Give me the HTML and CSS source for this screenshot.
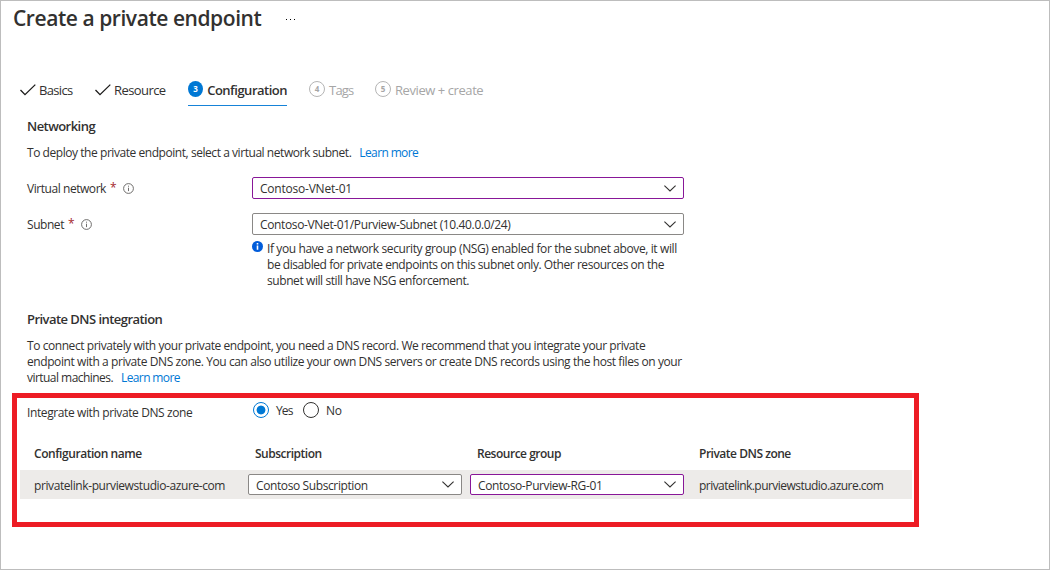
FILE: index.html
```
<!DOCTYPE html>
<html lang="en">
<head>
<meta charset="utf-8">
<title>Create a private endpoint</title>
<link rel="stylesheet" href="styles.css">
</head>
<body>
<main class="page">
  <header class="title-bar">
    <h1>Create a private endpoint</h1>
    <svg class="more" width="12" height="4" viewBox="0 0 12 4"><path d="M1 1h1v1H1zM5 1h1v1H5zM9 1h1v1H9z"/></svg>
  </header>

  <nav class="steps">
    <a class="step basics"><svg class="check" width="16" height="12" viewBox="0 0 16 12"><path d="M.5 6 5 10.7 15.3.6"/></svg><span>Basics</span></a>
    <a class="step resource"><svg class="check" width="16" height="12" viewBox="0 0 16 12"><path d="M.5 6 5 10.7 15.3.6"/></svg><span>Resource</span></a>
    <a class="step active"><i class="num">3</i><span>Configuration</span></a>
    <a class="step todo tags"><i class="num">4</i><span>Tags</span></a>
    <a class="step todo review"><i class="num">5</i><span>Review + create</span></a>
  </nav>

  <section class="networking">
    <h2>Networking</h2>
    <p class="intro"><span class="t44">To deploy the private endpoint, select a virtual network subnet.</span><a class="link">Learn more</a></p>
    <div class="field">
      <label><span class="t44">Virtual network</span><b class="req">*</b><svg class="info" width="11" height="11" viewBox="0 0 11 11"><circle cx="5.5" cy="5.5" r="4.9"/><path d="M5.5 4.7v3.4M5.5 2.7v1"/></svg></label>
      <div class="select touched"><span class="t22">Contoso-VNet-01</span><svg class="chev" width="12" height="7" viewBox="0 0 12 7"><path d="M.4.7 6 6 11.6.7"/></svg></div>
    </div>
    <div class="field">
      <label><span class="t44">Subnet</span><b class="req">*</b><svg class="info" width="11" height="11" viewBox="0 0 11 11"><circle cx="5.5" cy="5.5" r="4.9"/><path d="M5.5 4.7v3.4M5.5 2.7v1"/></svg></label>
      <div class="select"><span class="t36">Contoso-VNet-01/Purview-Subnet (10.40.0.0/24)</span><svg class="chev" width="12" height="7" viewBox="0 0 12 7"><path d="M.4.7 6 6 11.6.7"/></svg></div>
    </div>
    <div class="note">
      <svg width="11" height="11" viewBox="0 0 11 11"><circle cx="5.5" cy="5.5" r="5.5" fill="#015cda"/><path d="M4.7 4.4h1.6v4.3H4.7zM4.7 1.9h1.6v1.5H4.7z" fill="#fff"/></svg>
      <p><span class="t39">If you have a network security group (NSG) enabled for the subnet above, it will</span><br><span class="t44">be disabled for private endpoints on this subnet only. Other resources on the</span><br><span>subnet will still have NSG enforcement.</span></p>
    </div>
  </section>

  <section class="dns">
    <h2>Private DNS integration</h2>
    <p><span class="t43">To connect privately with your private endpoint, you need a DNS record. We recommend that you integrate your private</span><br><span>endpoint with a private DNS zone. You can also utilize your own DNS servers or create DNS records using the host files on your</span><br><span class="t53">virtual machines.</span><a class="link">Learn more</a></p>
  </section>

  <section class="zone">
    <div class="choice">
      <label class="question t39">Integrate with private DNS zone</label>
      <label class="option yes"><i class="radio on"></i><span>Yes</span></label>
      <label class="option no"><i class="radio"></i><span>No</span></label>
    </div>
    <div class="grid head">
      <div class="cell t44">Configuration name</div>
      <div class="cell">Subscription</div>
      <div class="cell">Resource group</div>
      <div class="cell">Private DNS zone</div>
    </div>
    <div class="grid row">
      <div class="cell t41">privatelink-purviewstudio-azure-com</div>
      <div class="select"><span class="t39">Contoso Subscription</span><svg class="chev" width="12" height="7" viewBox="0 0 12 7"><path d="M.4.7 6 6 11.6.7"/></svg></div>
      <div class="select touched"><span class="t39">Contoso-Purview-RG-01</span><svg class="chev" width="12" height="7" viewBox="0 0 12 7"><path d="M.4.7 6 6 11.6.7"/></svg></div>
      <div class="cell domain t53">privatelink.purviewstudio.azure.com</div>
    </div>
  </section>
</main>
</body>
</html>
```
FILE: styles.css
```
* { box-sizing: border-box; }
body { margin: 0; background: #fff; color: #323130; font: 12px/16px "Open Sans", "Noto Sans", sans-serif; letter-spacing: -.416px; }
h1, h2, p { margin: 0; }
.page { width: 1050px; height: 570px; border: 1px solid #bdbdbd; overflow: hidden; }
span, .num, .req, .cell, h1, h2 { white-space: nowrap; }
svg { flex: none; display: block; }

/* Tracking steps, in hundredths of a pixel */
.t22 { letter-spacing: -.22px; }
.t36 { letter-spacing: -.36px; }
.t39 { letter-spacing: -.39px; }
.t41 { letter-spacing: -.405px; }
.t43 { letter-spacing: -.434px; }
.t44 { letter-spacing: -.446px; }
.t53 { letter-spacing: -.54px; }

.title-bar { display: flex; align-items: center; height: 34px; padding-left: 12px; }
h1 { width: 272px; font-size: 21px; line-height: 34px; font-weight: 600; letter-spacing: -.44px; }
.more { margin-top: 3px; }

.steps { display: flex; height: 25px; margin-top: 46px; padding-left: 19px; font-size: 13px; }
.step { display: flex; align-items: flex-start; height: 25px; line-height: 18px; }
.check { margin: 3px 3px 0 0; fill: none; stroke: #1b1a19; stroke-width: 1.3; }
.basics { width: 75px; letter-spacing: -.672px; }
.resource { width: 93px; letter-spacing: -.582px; }
.active { width: 99px; margin-right: 22px; font-weight: 600; letter-spacing: -.5px; border-bottom: 1px solid #1683d8; }
.num { width: 16px; height: 16px; margin-right: 4px; border-radius: 50%; background: #0078d4; color: #fff; font: 700 8px/16px "Open Sans", sans-serif; letter-spacing: 0; text-align: center; }
.todo { color: #a6a6a6; }
.todo .num { background: none; border: 1px solid #b5b5b5; color: #a6a6a6; line-height: 14px; }
.tags { width: 66px; letter-spacing: -.785px; }
.review { letter-spacing: -.43px; }

h2 { font-size: 13px; line-height: 18px; font-weight: 600; letter-spacing: -.545px; }
.networking { padding: 11px 0 0 26px; }
.intro { display: flex; margin-top: 10px; }
.link { color: #0078d4; margin-left: 8px; letter-spacing: -.63px; }
.field { display: flex; height: 22px; margin-top: 14px; }
.intro + .field { margin-top: 16px; }
.field label { display: flex; align-items: center; width: 225px; }
.field label span, .select span { padding-top: 1px; }
.req { margin-left: 4px; width: 6px; color: #a4262c; font-weight: 400; }
.info { margin-left: 7px; fill: none; stroke: #605e5c; stroke-width: .9; }
.field .select { width: 432px; }
.select { display: flex; align-items: center; justify-content: space-between; height: 22px; padding: 0 7px; border: 1px solid #8a8886; border-radius: 2px; background: #fff; }
.select.touched { border-color: #881798; }
.chev { fill: none; stroke: #323130; stroke-width: 1.1; }
.note { display: flex; margin: 6px 0 0 225px; }
.note svg { margin: 0 4px 0 0; }

.dns { padding: 21px 0 0 26px; }
.dns h2 { margin-bottom: 10px; }

.zone { width: 907px; height: 134px; margin: 7px 0 0 11px; border: 5px solid #ed1c24; padding: 3px 2px 0 3px; }
.choice { display: flex; height: 18px; padding-left: 7px; }
.question { width: 226px; padding-top: 4px; }
.option { display: flex; gap: 7px; width: 50px; padding-top: 1px; }
.option span { padding-top: 1px; }
.yes { letter-spacing: -.9px; }
.no { letter-spacing: -.3px; }
.radio { width: 16px; height: 16px; border: 1px solid #323130; border-radius: 50%; background: #fff; }
.radio.on { border-color: #0078d4; background: radial-gradient(circle, #0078d4 4px, transparent 4.8px); }
.grid { display: grid; grid-template-columns: 206px 214px 214px 206px; column-gap: 8px; width: 892px; padding-left: 14px; }
.head { margin-top: 27px; font-weight: 600; letter-spacing: -.485px; }
.head .cell + .cell, .domain { padding-left: 7px; }
.row { height: 29px; margin-top: 8px; padding-top: 4px; background: #edebe9; }
.row .select { height: 21px; }
.row .select span { padding-top: 3px; }
.row .cell { line-height: 23px; }
```
